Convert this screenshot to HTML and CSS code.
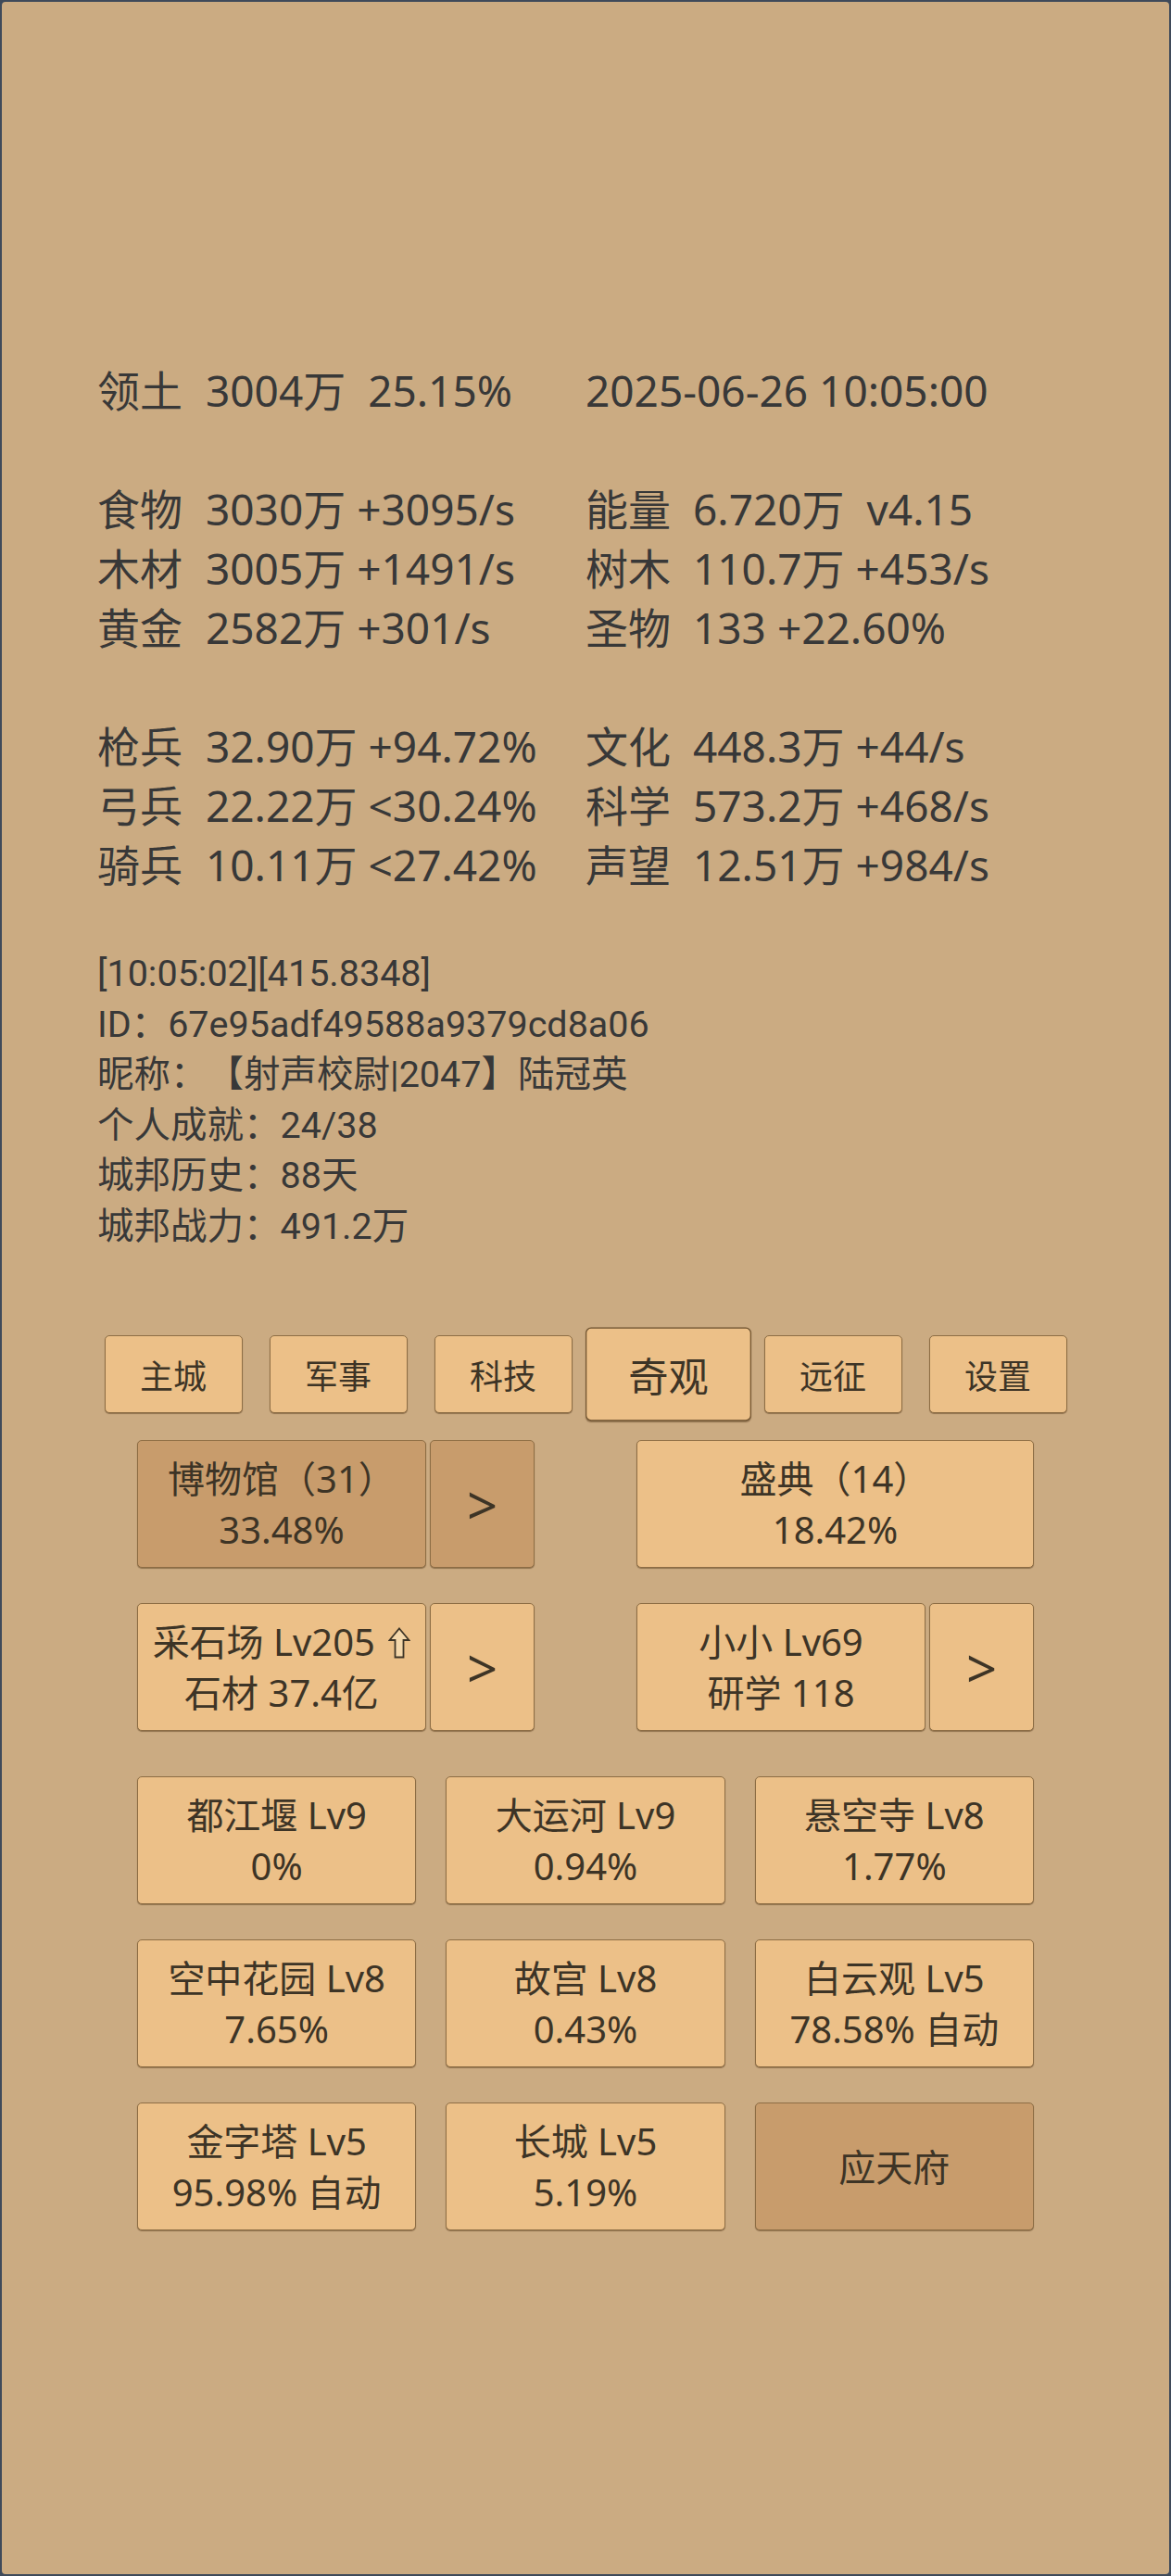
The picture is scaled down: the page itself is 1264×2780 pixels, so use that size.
FILE: index.html
```html
<!DOCTYPE html>
<html lang="zh-CN">
<head>
<meta charset="utf-8">
<title>城邦</title>
<link rel="stylesheet" href="styles.css">
</head>
<body>
<div class="frame">
  <section class="stats">
    <div class="row"><span class="k">领土</span><span class="v">3004万  25.15%</span><span class="dt">2025-06-26 10:05:00</span></div>
    <div class="row"></div>
    <div class="row"><span class="k">食物</span><span class="v">3030万 +3095/s</span><span class="k">能量</span><span class="v">6.720万  v4.15</span></div>
    <div class="row"><span class="k">木材</span><span class="v">3005万 +1491/s</span><span class="k">树木</span><span class="v">110.7万 +453/s</span></div>
    <div class="row"><span class="k">黄金</span><span class="v">2582万 +301/s</span><span class="k">圣物</span><span class="v">133 +22.60%</span></div>
    <div class="row"></div>
    <div class="row"><span class="k">枪兵</span><span class="v">32.90万 +94.72%</span><span class="k">文化</span><span class="v">448.3万 +44/s</span></div>
    <div class="row"><span class="k">弓兵</span><span class="v">22.22万 &lt;30.24%</span><span class="k">科学</span><span class="v">573.2万 +468/s</span></div>
    <div class="row"><span class="k">骑兵</span><span class="v">10.11万 &lt;27.42%</span><span class="k">声望</span><span class="v">12.51万 +984/s</span></div>
  </section>

  <section class="info">
    <div>[10:05:02][415.8348]</div>
    <div>ID：67e95adf49588a9379cd8a06</div>
    <div>昵称：【射声校尉|2047】陆冠英</div>
    <div>个人成就：24/38</div>
    <div>城邦历史：88天</div>
    <div>城邦战力：491.2万</div>
  </section>

  <nav class="tabs">
    <div class="tab-slot"><div class="tab">主城</div></div>
    <div class="tab-slot"><div class="tab">军事</div></div>
    <div class="tab-slot"><div class="tab">科技</div></div>
    <div class="tab-slot"><div class="tab active">奇观</div></div>
    <div class="tab-slot"><div class="tab">远征</div></div>
    <div class="tab-slot"><div class="tab">设置</div></div>
  </nav>

  <section class="wonders">
    <div class="pair">
      <div class="group">
        <div class="card main dark"><span>博物馆（31）</span><span>33.48%</span></div>
        <div class="card arrow dark">&gt;</div>
      </div>
      <div class="group">
        <div class="card wide"><span>盛典（14）</span><span>18.42%</span></div>
      </div>
    </div>
    <div class="pair last">
      <div class="group">
        <div class="card main"><span>采石场 Lv205 <svg class="up" viewBox="0 0 24 34" width="24" height="34"><polygon points="12,1.5 22.5,14 16.5,14 16.5,32.5 7.5,32.5 7.5,14 1.5,14" fill="#f4d7aa" stroke="#3d3426" stroke-width="1.8" stroke-linejoin="miter"/></svg></span><span>石材 37.4亿</span></div>
        <div class="card arrow">&gt;</div>
      </div>
      <div class="group">
        <div class="card main"><span>小小 Lv69</span><span>研学 118</span></div>
        <div class="card arrow">&gt;</div>
      </div>
    </div>
    <div class="grid">
      <div class="card"><span>都江堰 Lv9</span><span>0%</span></div>
      <div class="card"><span>大运河 Lv9</span><span>0.94%</span></div>
      <div class="card"><span>悬空寺 Lv8</span><span>1.77%</span></div>
      <div class="card"><span>空中花园 Lv8</span><span>7.65%</span></div>
      <div class="card"><span>故宫 Lv8</span><span>0.43%</span></div>
      <div class="card"><span>白云观 Lv5</span><span>78.58% 自动</span></div>
      <div class="card"><span>金字塔 Lv5</span><span>95.98% 自动</span></div>
      <div class="card"><span>长城 Lv5</span><span>5.19%</span></div>
      <div class="card dark"><span>应天府</span></div>
    </div>
  </section>
</div>
</body>
</html>
```

FILE: styles.css
```css
html, body {
  margin: 0;
  padding: 0;
  background: #3f4a5a;
}

.frame {
  box-sizing: border-box;
  width: 1264px;
  height: 2780px;
  border: 2px solid #3f4a5a;
  border-radius: 6px;
  background: #cbab82;
  padding-top: 387px;
  font-family: "Noto Sans", "Noto Sans CJK SC", sans-serif;
  color: #383838;
  overflow: hidden;
  text-spacing-trim: space-all;
}

.stats {
  padding-left: 103px;
  font-size: 46px;
}

.row {
  display: grid;
  grid-template-columns: 117px 410px 116px auto;
  height: 64px;
  line-height: 64px;
  white-space: pre;
}

.row .dt {
  grid-column: 3 / 5;
}

.info {
  margin-top: 59px;
  padding-left: 103px;
  font-family: Roboto, "Noto Sans CJK SC", sans-serif;
  font-size: 39.5px;
  line-height: 54.5px;
  white-space: nowrap;
}

.tabs {
  display: flex;
  justify-content: center;
  margin-top: 90px;
}

.tab-slot {
  width: 178px;
  display: flex;
  justify-content: center;
}

.tab {
  box-sizing: border-box;
  width: 149px;
  height: 84px;
  border: 1px solid #8d6d44;
  border-radius: 5px;
  background: #ecc088;
  box-shadow: 0 1px 1px rgba(70, 45, 15, 0.45);
  display: flex;
  align-items: center;
  justify-content: center;
  font-size: 36px;
  color: #3d3426;
}

.tab.active {
  transform: scale(1.2);
  border-color: #6f5330;
}

.wonders {
  width: 968px;
  margin: 29px auto 0;
}

.pair {
  display: grid;
  grid-template-columns: 429px 429px;
  column-gap: 110px;
  margin-bottom: 38px;
}

.pair.last {
  margin-bottom: 49px;
}

.group {
  display: flex;
  gap: 4px;
}

.card {
  box-sizing: border-box;
  height: 138px;
  border: 1px solid #8d6d44;
  border-radius: 5px;
  background: #ecc088;
  box-shadow: 0 1px 1px rgba(70, 45, 15, 0.45);
  display: flex;
  flex-direction: column;
  align-items: center;
  justify-content: center;
  font-size: 40px;
  line-height: 55px;
  color: #3d3426;
  white-space: nowrap;
}

.card.dark {
  background: #c89c6c;
}

.card.main {
  width: 312px;
}

.card.wide {
  flex: 1;
}

.card.arrow {
  width: 113px;
  font-size: 58px;
}

.up {
  vertical-align: -3px;
  margin-left: 4px;
}

.grid {
  display: grid;
  grid-template-columns: repeat(3, 1fr);
  column-gap: 32px;
  row-gap: 38px;
}
```
